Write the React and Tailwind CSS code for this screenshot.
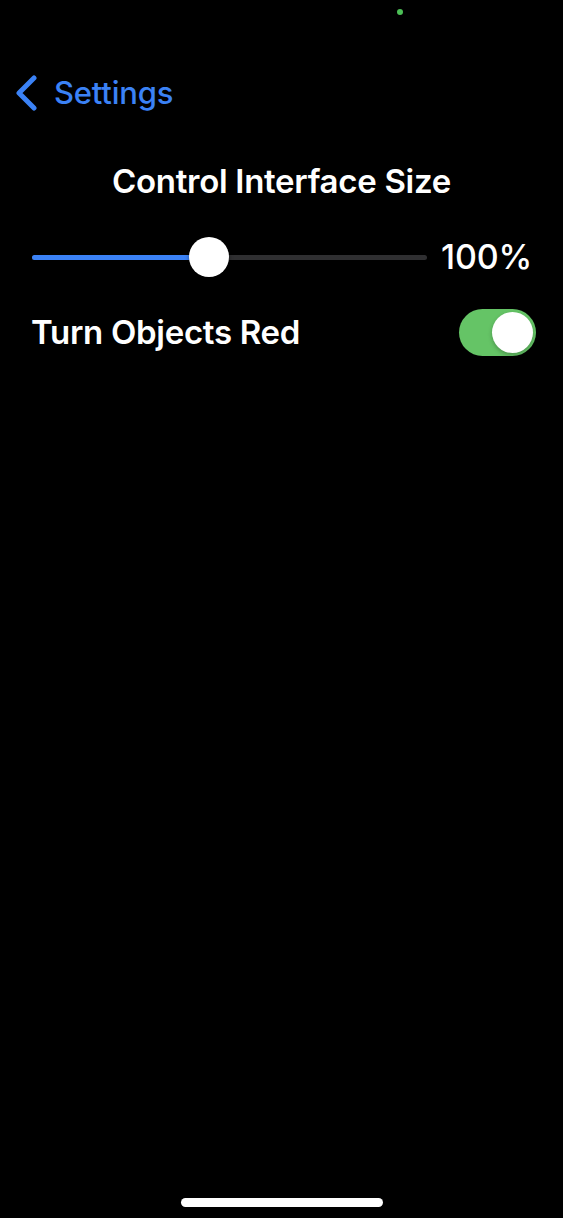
import React from "react";

export default function App() {
  const font = { fontFamily: "Inter, 'Noto Sans', sans-serif" };
  return (
    <div className="w-[563px] h-[1218px] bg-black flex flex-col text-white relative" style={font}>
      <div className="h-[24px] relative">
        <div className="absolute left-[397px] top-[9px] w-[6px] h-[6px] rounded-full bg-[#4cbf56]" />
      </div>
      <div className="mt-[51px] h-[36px] flex items-center pl-[14px]">
        <svg width="24" height="36" viewBox="0 0 24 36" className="mr-[16px]">
          <path d="M20 3 L5 18 L20 33" fill="none" stroke="#3b82f6" strokeWidth="5" strokeLinecap="round" strokeLinejoin="round" />
        </svg>
        <span className="text-[31px] leading-[36px] font-medium text-[#3b82f6] tracking-[-0.2px]">Settings</span>
      </div>
      <div className="mt-[50px] h-[40px] text-center text-[33px] font-semibold leading-[40px] tracking-[-0.3px]">
        Control Interface Size
      </div>
      <div className="mt-[34px] flex items-center pl-[32px] pr-[31px] h-[44px]">
        <div className="relative w-[395px] h-[5px] rounded-full bg-[#2f2f31]">
          <div className="absolute left-0 top-0 h-[5px] w-[177px] rounded-full bg-[#3b82f6]" />
          <div className="absolute left-[157px] top-[-17.5px] w-[40px] h-[40px] rounded-full bg-white shadow-[0_1px_4px_rgba(0,0,0,0.4)]" />
        </div>
        <span className="ml-auto text-[34px] leading-[44px] font-medium tracking-[-0.2px]">100%</span>
      </div>
      <div className="mt-[30px] flex items-center justify-between pl-[31px] pr-[27px] h-[47px]">
        <span className="text-[33px] leading-[47px] font-semibold tracking-[-0.3px]">Turn Objects Red</span>
        <div className="w-[77px] h-[47px] rounded-full bg-[#65c466] flex items-center justify-end pr-[3px]">
          <div className="w-[41px] h-[41px] rounded-full bg-white shadow-[0_2px_4px_rgba(0,0,0,0.25)]" />
        </div>
      </div>
      <div className="flex-1" />
      <div className="mb-[11px] flex justify-center">
        <div className="w-[202px] h-[9px] rounded-full bg-white" />
      </div>
    </div>
  );
}
